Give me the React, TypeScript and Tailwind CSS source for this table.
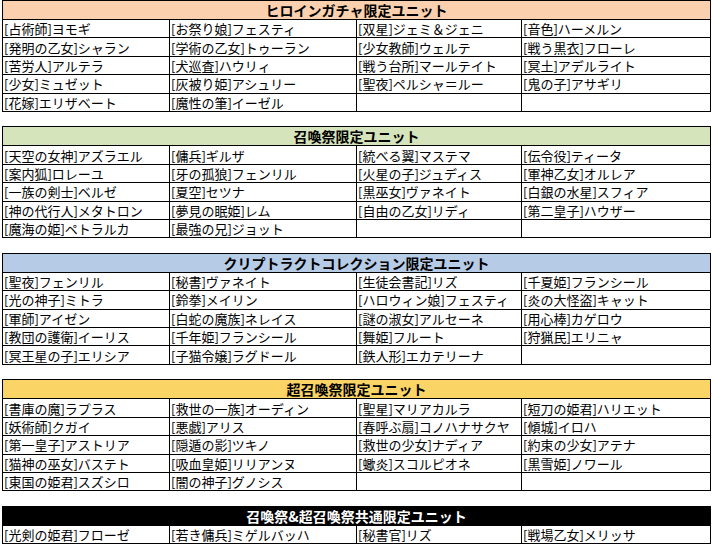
const tables = [
  {
    title: 'ヒロインガチャ限定ユニット',
    bg: 'bg-[#fad0ae]',
    text: 'text-black',
    rows: [
      ['[占術師]ヨモギ', '[お祭り娘]フェスティ', '[双星]ジェミ＆ジェニ', '[音色]ハーメルン'],
      ['[発明の乙女]シャラン', '[学術の乙女]トゥーラン', '[少女教師]ウェルテ', '[戦う黒衣]フローレ'],
      ['[苦労人]アルテラ', '[犬巡査]ハウリィ', '[戦う台所]マールテイト', '[冥土]アデルライト'],
      ['[少女]ミュゼット', '[灰被り姫]アシュリー', '[聖夜]ペルシャ＝ルー', '[鬼の子]アサギリ'],
      ['[花嫁]エリザベート', '[魔性の筆]イーゼル', '', ''],
    ],
  },
  {
    title: '召喚祭限定ユニット',
    bg: 'bg-[#d6e4bb]',
    text: 'text-black',
    rows: [
      ['[天空の女神]アズラエル', '[傭兵]ギルザ', '[統べる翼]マステマ', '[伝令役]ティータ'],
      ['[案内狐]ロレーユ', '[牙の孤狼]フェンリル', '[火星の子]ジュディス', '[軍神乙女]オルレア'],
      ['[一族の剣士]ベルゼ', '[夏空]セツナ', '[黒巫女]ヴァネイト', '[白銀の水星]スフィア'],
      ['[神の代行人]メタトロン', '[夢見の眠姫]レム', '[自由の乙女]リディ', '[第二皇子]ハウザー'],
      ['[魔海の姫]ペトラルカ', '[最強の兄]ジョット', '', ''],
    ],
  },
  {
    title: 'クリプトラクトコレクション限定ユニット',
    bg: 'bg-[#b5cbe6]',
    text: 'text-black',
    rows: [
      ['[聖夜]フェンリル', '[秘書]ヴァネイト', '[生徒会書記]リズ', '[千夏姫]フランシール'],
      ['[光の神子]ミトラ', '[鈴拳]メイリン', '[ハロウィン娘]フェスティ', '[炎の大怪盗]キャット'],
      ['[軍師]アイゼン', '[白蛇の魔族]ネレイス', '[謎の淑女]アルセーネ', '[用心棒]カゲロウ'],
      ['[教団の護衛]イーリス', '[千年姫]フランシール', '[舞姫]フルート', '[狩猟民]エリニャ'],
      ['[冥王星の子]エリシア', '[子猫令嬢]ラグドール', '[鉄人形]エカテリーナ', ''],
    ],
  },
  {
    title: '超召喚祭限定ユニット',
    bg: 'bg-[#fbd466]',
    text: 'text-black',
    rows: [
      ['[書庫の魔]ラプラス', '[救世の一族]オーディン', '[聖星]マリアカルラ', '[短刀の姫君]ハリエット'],
      ['[妖術師]クガイ', '[悪戯]アリス', '[春呼ぶ扇]コノハナサクヤ', '[傾城]イロハ'],
      ['[第一皇子]アストリア', '[隠遁の影]ツキノ', '[救世の少女]ナディア', '[約束の少女]アテナ'],
      ['[猫神の巫女]バステト', '[吸血皇姫]リリアンヌ', '[蠍炎]スコルピオネ', '[黒雪姫]ノワール'],
      ['[東国の姫君]スズシロ', '[闇の神子]グノシス', '', ''],
    ],
  },
  {
    title: '召喚祭&超召喚祭共通限定ユニット',
    bg: 'bg-black',
    text: 'text-white',
    rows: [['[光剣の姫君]フローゼ', '[若き傭兵]ミゲルバッハ', '[秘書官]リズ', '[戦場乙女]メリッサ']],
  },
];

const UnitTable = ({ title, bg, text, rows }: (typeof tables)[number]) => (
  <div className="ml-[2px] mb-[14.5px] w-[709px] border border-black">
    <div className={`h-[18px] flex items-center justify-center text-[14px] font-bold leading-none ${bg} ${text}`}>
      {title}
    </div>
    {rows.map((row, i) => (
      <div key={i} className="grid grid-cols-[167px_187px_165px_188px] border-t border-black bg-white">
        {row.map((cell, j) => (
          <div
            key={j}
            className="h-[17.4px] flex items-center pl-[1px] text-[13px] leading-none whitespace-nowrap border-r border-black last:border-r-0"
          >
            {cell}
          </div>
        ))}
      </div>
    ))}
  </div>
);

export default function App() {
  return (
    <div
      className="w-[712px] h-[544px] overflow-hidden bg-white text-black"
      style={{ fontFamily: '"Noto Sans CJK JP", "Liberation Sans", sans-serif' }}
    >
      {tables.map((t, i) => (
        <UnitTable key={i} {...t} />
      ))}
    </div>
  );
}
